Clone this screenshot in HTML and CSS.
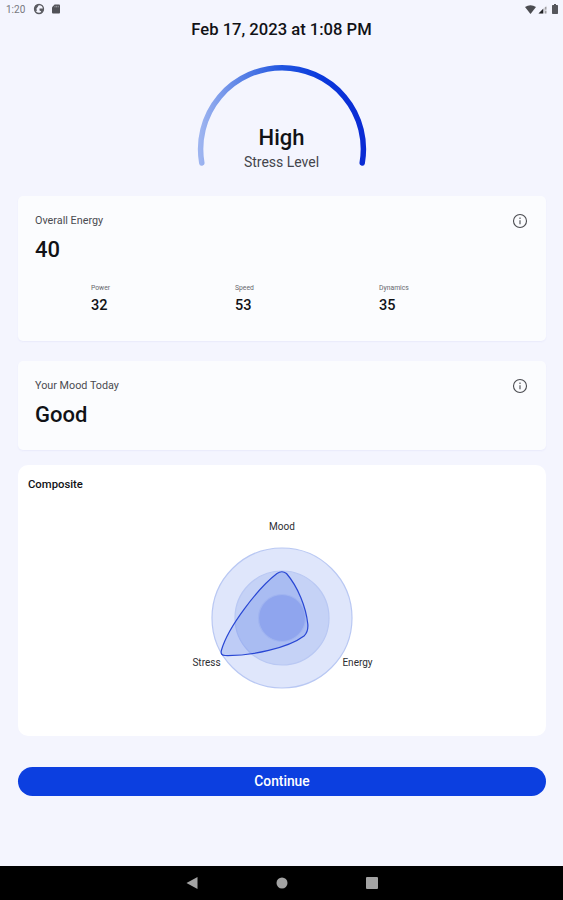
FILE: index.html
```html
<!DOCTYPE html>
<html lang="en">
  <head>
    <meta charset="UTF-8" />
    <meta name="viewport" content="width=device-width, initial-scale=1.0" />
    <title>Stress Level</title>
    <link rel="stylesheet" href="styles.css">
  </head>
  <body>
    <div class="screen">
      <div class="status-bar">
        <span class="clock">1:20</span>
        <svg class="status-icon" width="12" height="12" viewBox="0 0 12 12">
          <circle cx="6" cy="6" r="4.5" fill="none" stroke="#5b5c62" stroke-width="1.3" />
          <path d="M2 3Q4 1 6 1.200L5 3.500 3.500 5.500 3.800 8 2.500 8.500Q1 6 2 3zM6.500 5.500h4.300Q10.500 9.500 7 10.800L8.200 8.200 6.500 7.500z" fill="#5b5c62" />
        </svg>
        <svg class="status-icon" width="10" height="10" viewBox="0 0 10 10">
          <path d="M3.600 .5H8q1 0 1 1v7q0 1-1 1H2q-1 0-1-1V3.200z" fill="#505157" />
          <path d="M4 1.800v1.600M5.600 1.800v1.600M7.200 1.800v1.600" stroke="#b5b6bd" stroke-width=".7" />
        </svg>
        <div class="status-right">
          <svg width="11" height="9" viewBox="0 0 11 9">
            <path d="M0 2Q5.500-1.500 11 2L5.500 9z" fill="#4b4c51" />
          </svg>
          <svg width="9" height="9" viewBox="0 0 9 9">
            <path d="M8.500 .5v8H.5z" fill="#d3d3da" />
            <path d="M5.200 3.800v4.700H.5z" fill="#222327" />
            <path d="M7.800 2v2.500M7.800 6v2.500" stroke="#777" stroke-width=".8" />
          </svg>
          <svg class="battery" width="6" height="10" viewBox="0 0 6 10">
            <path d="M2 0h2v1h1.300q.7 0 .7.700v7.600q0 .7-.7.700H.7Q0 10 0 9.300V1.700Q0 1 .7 1H2z" fill="#55565c" />
          </svg>
        </div>
      </div>

      <h1>Feb 17, 2023 at 1:08 PM</h1>

      <div class="gauge">
        <svg width="176" height="108" viewBox="0 0 176 108">
          <defs>
            <linearGradient id="arc" x1="0" y1="0" x2="1" y2="0">
              <stop offset="0" stop-color="#9db4f0" />
              <stop offset="0.25" stop-color="#5a82e6" />
              <stop offset="0.5" stop-color="#2055e0" />
              <stop offset="0.75" stop-color="#0a38dc" />
              <stop offset="1" stop-color="#0a2bd4" />
            </linearGradient>
          </defs>
          <path d="M7.800 102A81.400 81.400 0 1 1 168.200 102" fill="none" stroke="url(#arc)" stroke-width="5.500" stroke-linecap="round" />
        </svg>
        <div class="gauge-text">
          <div class="gauge-value">High</div>
          <div class="gauge-label">Stress Level</div>
        </div>
      </div>

      <section class="card energy">
        <div class="card-header">
          <span>Overall Energy</span>
          <svg class="info" width="16" height="16" viewBox="0 0 16 16">
            <circle cx="8" cy="8" r="6.500" />
            <path d="M8 7.200v4M8 4.600v1.300" />
          </svg>
        </div>
        <div class="value">40</div>
        <div class="stats">
          <div>
            <div class="stat-label">Power</div>
            <div class="stat-value">32</div>
          </div>
          <div>
            <div class="stat-label">Speed</div>
            <div class="stat-value">53</div>
          </div>
          <div>
            <div class="stat-label">Dynamics</div>
            <div class="stat-value">35</div>
          </div>
        </div>
      </section>

      <section class="card mood">
        <div class="card-header">
          <span>Your Mood Today</span>
          <svg class="info" width="16" height="16" viewBox="0 0 16 16">
            <circle cx="8" cy="8" r="6.500" />
            <path d="M8 7.200v4M8 4.600v1.300" />
          </svg>
        </div>
        <div class="value">Good</div>
      </section>

      <section class="composite">
        <h2>Composite</h2>
        <svg class="radar" width="200" height="180" viewBox="0 0 200 180">
          <g class="rings">
            <circle cx="100" cy="103" r="70" fill="#dfe6fb" />
            <circle cx="100" cy="103" r="47" fill="#c5d2f6" />
            <circle cx="100" cy="103" r="23.500" fill="#a4b6f0" />
          </g>
          <path class="shape" d="M95 58.500Q100 55 104.500 58.500C116 72 124 92 125.800 109Q126.500 117 122 121C106 133 70 141 43 140.500Q38 140.500 39.500 135C46 112 76 73 95 58.500Z" />
          <text x="100" y="14.500">Mood</text>
          <text x="24.500" y="150.500">Stress</text>
          <text x="175.500" y="150.500">Energy</text>
        </svg>
      </section>

      <button class="btn">Continue</button>

      <nav class="nav-bar">
        <svg width="12" height="12" viewBox="0 0 12 12"><path d="M11.500 0v12L.5 6z" /></svg>
        <svg width="12" height="12" viewBox="0 0 12 12"><circle cx="6" cy="6" r="5.500" /></svg>
        <svg width="12" height="12" viewBox="0 0 12 12"><rect width="12" height="12" rx="1" /></svg>
      </nav>
    </div>
  </body>
</html>
```
FILE: styles.css
```css
body {
  margin: 0;
  font-family: Roboto, sans-serif;
  color: #111216;
  background: #f4f5fe;
}

.screen {
  display: flex;
  flex-direction: column;
  height: 900px;
}

.status-bar {
  display: flex;
  align-items: center;
  height: 18px;
  padding: 0 5px 0 6px;
  color: #77787f;
}

.clock {
  width: 27px;
  font-size: 10px;
}

.status-icon {
  margin-right: 6px;
}

.status-right {
  display: flex;
  align-items: center;
  gap: 2px;
  margin-left: auto;
}

.battery {
  margin-left: 3px;
}

h1 {
  margin: 0;
  font-size: 16.6px;
  font-weight: 500;
  line-height: 24px;
  text-align: center;
}

.gauge {
  position: relative;
  height: 108px;
  margin-top: 19px;
  text-align: center;
}

.gauge-text {
  position: absolute;
  left: 0;
  right: 0;
  bottom: -4px;
}

.gauge-value {
  font-size: 22px;
  font-weight: 500;
  line-height: 26px;
}

.gauge-label {
  font-size: 14px;
  line-height: 22px;
  color: #44454c;
}

.card {
  box-sizing: border-box;
  margin: 0 17px 0 18px;
  padding: 17px 18px 0 17px;
  background: #fbfcfe;
  border-radius: 5px;
  box-shadow: 0 1px 2px rgba(60, 70, 200, 0.06);
}

.energy {
  height: 145px;
  margin-top: 27px;
}

.mood {
  height: 89px;
  margin-top: 20px;
}

.card-header {
  display: flex;
  justify-content: space-between;
  height: 16px;
  font-size: 10.8px;
  line-height: 15px;
  color: #4a4b50;
}

.info {
  fill: none;
  stroke: #4a4b50;
  stroke-width: 1.1;
}

.value {
  margin-top: 6px;
  font-size: 22px;
  font-weight: 500;
  line-height: 29px;
}

.stats {
  display: grid;
  grid-template-columns: repeat(3, 144px);
  margin: 18px 0 0 56px;
}

.stat-label {
  font-size: 6.8px;
  line-height: 12px;
  color: #66676d;
}

.stat-value {
  font-size: 14.5px;
  font-weight: 500;
  line-height: 24px;
}

.composite {
  box-sizing: border-box;
  height: 271px;
  margin: 15px 17px 0 18px;
  padding: 13px 10px;
  background: #fff;
  border-radius: 10px;
}

h2 {
  margin: 0;
  font-size: 11.3px;
  font-weight: 500;
  line-height: 14px;
}

.radar {
  display: block;
  margin: 23px auto 0;
}

.rings circle {
  stroke: #b9c8f3;
  stroke-width: 1.2;
}

.shape {
  fill: rgba(60, 100, 230, 0.2);
  stroke: #2947d4;
  stroke-width: 1.2;
}

.radar text {
  font-size: 10px;
  text-anchor: middle;
  fill: #2d2e33;
}

.btn {
  height: 29px;
  margin: 31px 17px 0 18px;
  padding: 0 0 2px;
  font-family: inherit;
  font-size: 13.8px;
  font-weight: 500;
  color: #fff;
  background: #0c3fe0;
  border: none;
  border-radius: 15px;
}

.nav-bar {
  display: flex;
  align-items: center;
  justify-content: center;
  gap: 78px;
  height: 34px;
  margin-top: auto;
  background: #000;
}

.nav-bar svg {
  fill: #a3a3a3;
}
```
